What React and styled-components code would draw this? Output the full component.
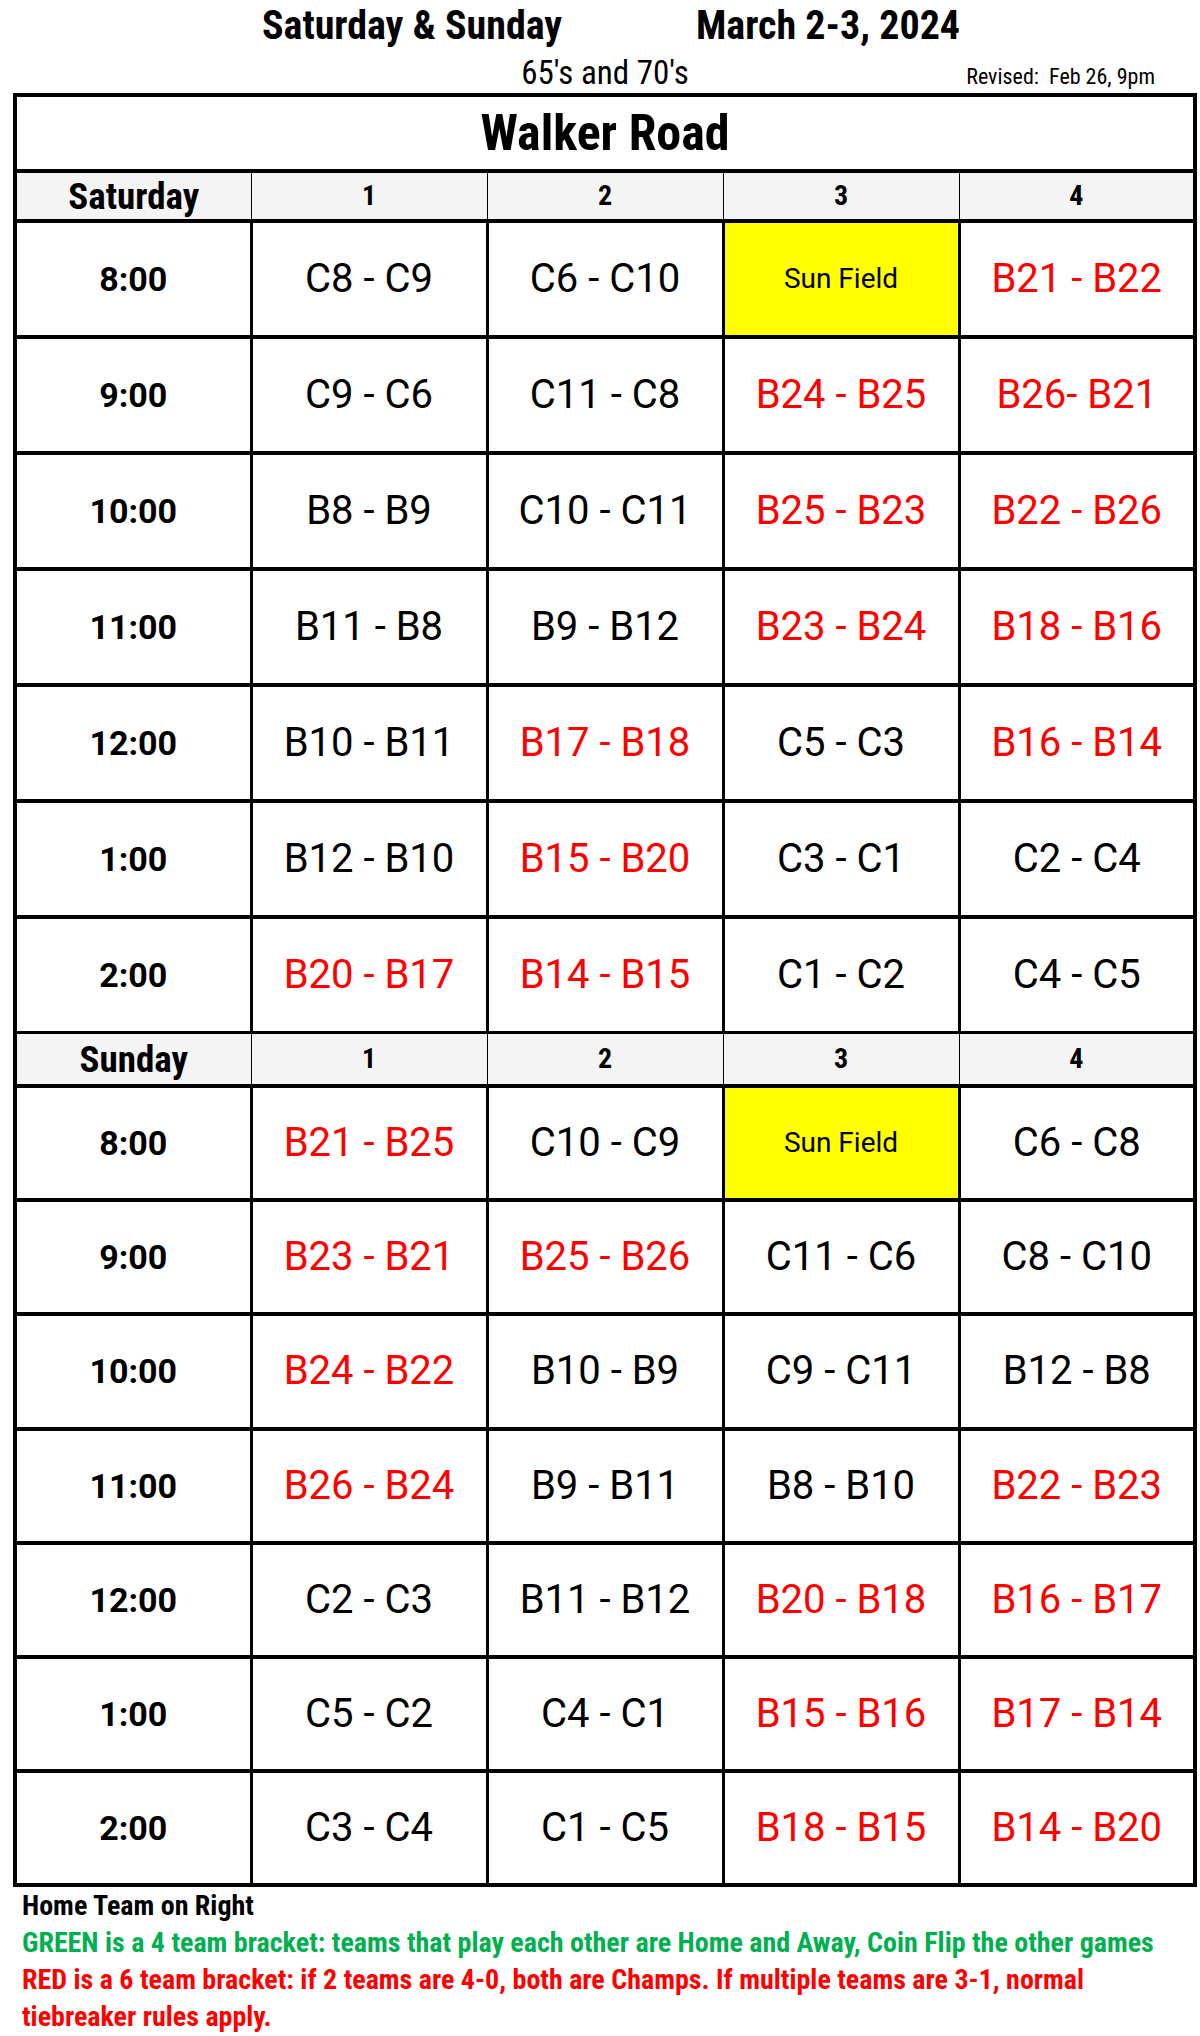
import React from "react";
import styled, { createGlobalStyle } from "styled-components";

const narrow = `"Liberation Sans Narrow", "Roboto Condensed", "DejaVu Sans Condensed", "Liberation Sans", sans-serif`;
const regular = `Roboto, "Liberation Sans", sans-serif`;

const colors = {
  red: "#ff0000",
  green: "#00b050",
  yellow: "#ffff00",
  headBg: "#f4f4f4",
  line: "#000",
};

const GlobalStyle = createGlobalStyle`
  body {
    margin: 0;
    background: #fff;
    font-family: ${regular};
    color: #000;
  }
`;

const Page = styled.div`
  width: 1200px;
  height: 2036px;
  overflow: hidden;
  padding: 0 3px 0 13px;
  box-sizing: border-box;
`;

const TopLine = styled.div`
  display: grid;
  grid-template-columns: 434px auto;
  height: 52px;
  align-items: center;
  padding-left: 249px;
  font-family: ${narrow};
  font-stretch: condensed;
  font-weight: 700;
  font-size: 40px;
  line-height: 1;
`;

const SubLine = styled.div`
  display: grid;
  grid-template-columns: 1fr auto 1fr;
  align-items: center;
  height: 41px;
  font-family: ${narrow};
  font-stretch: condensed;
  line-height: 1;
`;

const Ages = styled.div`
  grid-column: 2;
  font-size: 33px;
`;

const Revised = styled.div`
  grid-column: 3;
  justify-self: end;
  margin-right: 42px;
  font-size: 22px;
  padding-top: 8px;
`;

const Table = styled.table`
  width: 1184px;
  border-collapse: collapse;
  table-layout: fixed;
  border: 4px solid ${colors.line};
`;

const TitleCell = styled.td`
  height: 72px;
  padding: 0;
  text-align: center;
  font-family: ${narrow};
  font-stretch: condensed;
  font-weight: 700;
  font-size: 50px;
  line-height: 1;
  border-bottom: 4px solid ${colors.line};
`;

const HeadCell = styled.td`
  height: ${(p) => (p.$tall ? "50px" : "46px")};
  padding: 0;
  background: ${colors.headBg};
  text-align: center;
  font-family: ${narrow};
  font-stretch: condensed;
  font-weight: 700;
  font-size: ${(p) => (p.$day ? "37px" : "28px")};
  line-height: 1;
  border-left: 1px solid ${colors.line};
  border-bottom: 4px solid ${colors.line};
`;

const TimeCell = styled.td`
  height: ${(p) => p.$h}px;
  padding: 0;
  text-align: center;
  font-family: ${regular};
  font-weight: 700;
  font-size: 34px;
  line-height: 1;
  border: 3px solid ${colors.line};
  border-top-width: 4px;
`;

const GameCell = styled.td`
  padding: 0;
  text-align: center;
  font-family: ${regular};
  font-size: ${(p) => (p.$sun ? "28px" : "40px")};
  line-height: 1;
  color: ${(p) => (p.$red ? colors.red : "#000")};
  background: ${(p) => (p.$sun ? colors.yellow : "#fff")};
  border: 3px solid ${colors.line};
  border-top-width: 4px;
`;

const Notes = styled.div`
  padding: 0 0 0 9px;
  font-family: ${narrow};
  font-stretch: condensed;
  font-weight: 700;
  font-size: 28px;
  line-height: 37px;
`;

const Note = styled.div`
  color: ${(p) => p.$color || "#000"};
`;

const SUN = "SUN";

const days = [
  {
    name: "Saturday",
    rowHeight: 112,
    rows: [
      ["8:00", "C8 - C9", "C6 - C10", SUN, "*B21 - B22"],
      ["9:00", "C9 - C6", "C11 - C8", "*B24 - B25", "*B26- B21"],
      ["10:00", "B8 - B9", "C10 - C11", "*B25 - B23", "*B22 - B26"],
      ["11:00", "B11 - B8", "B9 - B12", "*B23 - B24", "*B18 - B16"],
      ["12:00", "B10 - B11", "*B17 - B18", "C5 - C3", "*B16 - B14"],
      ["1:00", "B12 - B10", "*B15 - B20", "C3 - C1", "C2 - C4"],
      ["2:00", "*B20 - B17", "*B14 - B15", "C1 - C2", "C4 - C5"],
    ],
  },
  {
    name: "Sunday",
    tall: true,
    rowHeight: 110.2,
    rows: [
      ["8:00", "*B21 - B25", "C10 - C9", SUN, "C6 - C8"],
      ["9:00", "*B23 - B21", "*B25 - B26", "C11 - C6", "C8 - C10"],
      ["10:00", "*B24 - B22", "B10 - B9", "C9 - C11", "B12 - B8"],
      ["11:00", "*B26 - B24", "B9 - B11", "B8 - B10", "*B22 - B23"],
      ["12:00", "C2 - C3", "B11 - B12", "*B20 - B18", "*B16 - B17"],
      ["1:00", "C5 - C2", "C4 - C1", "*B15 - B16", "*B17 - B14"],
      ["2:00", "C3 - C4", "C1 - C5", "*B18 - B15", "*B14 - B20"],
    ],
  },
];

const Game = ({ value }) => {
  if (value === SUN) return <GameCell $sun>Sun Field</GameCell>;
  const red = value.startsWith("*");
  return <GameCell $red={red}>{red ? value.slice(1) : value}</GameCell>;
};

export default function App() {
  return (
    <Page>
      <GlobalStyle />
      <TopLine>
        <span>Saturday &amp; Sunday</span>
        <span>March 2-3, 2024</span>
      </TopLine>
      <SubLine>
        <Ages>65's and 70's</Ages>
        <Revised>Revised:&nbsp; Feb 26, 9pm</Revised>
      </SubLine>
      <Table>
        <colgroup>
          <col style={{ width: 236 }} />
          <col />
          <col />
          <col />
          <col />
        </colgroup>
        <tbody>
          <tr>
            <TitleCell colSpan={5}>Walker Road</TitleCell>
          </tr>
          {days.map((day) => (
            <React.Fragment key={day.name}>
              <tr>
                <HeadCell $day $tall={day.tall}>{day.name}</HeadCell>
                {[1, 2, 3, 4].map((n) => (
                  <HeadCell key={n} $tall={day.tall}>{n}</HeadCell>
                ))}
              </tr>
              {day.rows.map(([time, ...games]) => (
                <tr key={time}>
                  <TimeCell $h={day.rowHeight}>{time}</TimeCell>
                  {games.map((g, i) => (
                    <Game key={i} value={g} />
                  ))}
                </tr>
              ))}
            </React.Fragment>
          ))}
        </tbody>
      </Table>
      <Notes>
        <Note>Home Team on Right</Note>
        <Note $color={colors.green}>
          GREEN is a 4 team bracket: teams that play each other are Home and Away, Coin Flip the other games
        </Note>
        <Note $color={colors.red}>
          RED is a 6 team bracket: if 2 teams are 4-0, both are Champs. If multiple teams are 3-1, normal
          <br />
          tiebreaker rules apply.
        </Note>
      </Notes>
    </Page>
  );
}
